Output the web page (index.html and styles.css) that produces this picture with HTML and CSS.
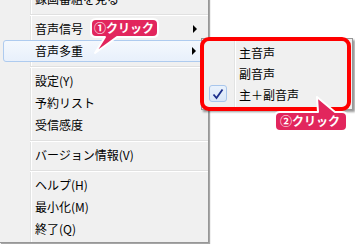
FILE: index.html
```html
<!DOCTYPE html>
<html lang="ja">
<head>
    <meta charset="UTF-8">
    <title>音声多重メニュー</title>
    <link rel="stylesheet" href="styles.css">
</head>
<body>
    <div class="menu">
        <div class="item">録画番組を見る</div>
        <div class="sep"></div>
        <div class="item has-sub">音声信号<span class="arrow"></span></div>
        <div class="item has-sub active">音声多重<span class="arrow"></span></div>
        <div class="sep"></div>
        <div class="item">設定(Y)</div>
        <div class="item">予約リスト</div>
        <div class="item">受信感度</div>
        <div class="sep"></div>
        <div class="item">バージョン情報(V)</div>
        <div class="sep"></div>
        <div class="item">ヘルプ(H)</div>
        <div class="item">最小化(M)</div>
        <div class="item">終了(Q)</div>
    </div>

    <!-- submenu popup -->
    <div class="submenu">
        <div class="sub-item">主音声</div>
        <div class="sub-item">副音声</div>
        <div class="sub-item checked">
            <span class="check">
                <svg width="12" height="12" viewBox="0 0 12 12"><path d="M1.5 6.5 L4.5 10 L10.5 1.5" fill="none" stroke="#1c2f8c" stroke-width="1.8"/></svg>
            </span>
            主＋副音声
        </div>
    </div>

    <!-- annotations -->
    <div class="mark"></div>

    <svg class="bubble-shape bubble-one" width="80" height="44" viewBox="86 14 80 44">
        <path d="M96 19 H153 Q158 19 158 24 V32 Q158 37 153 37 H117 L95 53 L105 37 H96 Q91 37 91 32 V24 Q91 19 96 19 Z"/>
    </svg>
    <div class="bubble-text bubble-text-one">①クリック</div>

    <svg class="bubble-shape bubble-two" width="84" height="42" viewBox="272 94 84 42">
        <path d="M280 112 H318 L317 97 L335 112 H342 Q347 112 347 117 V126 Q347 131 342 131 H280 Q275 131 275 126 V117 Q275 112 280 112 Z"/>
    </svg>
    <div class="bubble-text bubble-text-two">②クリック</div>
</body>
</html>
```

FILE: styles.css
```css
body {
    margin: 0;
    background: #ffffff;
    font-family: "Noto Sans CJK JP", "Noto Sans", sans-serif;
    font-size: 12px;
    color: #000;
    overflow: hidden;
    height: 244px;
}
.menu {
    width: 209px;
    box-sizing: border-box;
    margin-top: -12px;
    padding-bottom: 2px;
    background-color: #f0f0f0;
    /* icon gutter line */
    background-image: linear-gradient(to right, transparent 30px, #e2e3e3 30px, #e2e3e3 31px, #ffffff 31px, #ffffff 32px, transparent 32px);
    border-right: 1px solid #979797;
    border-bottom: 1px solid #979797;
    box-shadow: 1px 1px 1px rgba(0, 0, 0, 0.35);
}
.item {
    height: 22px;
    line-height: 22px;
    padding-left: 35px;
    padding-right: 11px;
    display: flex;
    justify-content: space-between;
    align-items: center;
    box-sizing: border-box;
    white-space: nowrap;
}
.item.active {
    margin: 0 3px;
    padding-left: 31px;
    padding-right: 8px;
    border: 1px solid #aecbef;
    border-radius: 3px;
    background: linear-gradient(#f4f8fd, #e8f0fb);
}
.arrow {
    width: 0;
    height: 0;
    border-left: 4px solid #000;
    border-top: 4px solid transparent;
    border-bottom: 4px solid transparent;
}
.sep {
    margin: 4px 0 2px 30px;
    border-top: 1px solid #e0e0e0;
    border-bottom: 1px solid #ffffff;
}
.submenu {
    position: absolute;
    left: 201px;
    top: 38px;
    width: 152px;
    height: 72px;
    box-sizing: border-box;
    padding-top: 3px;
    background-color: #f0f0f0;
    background-image: linear-gradient(to right, transparent 32px, #e2e3e3 32px, #e2e3e3 33px, #ffffff 33px, #ffffff 34px, transparent 34px);
    border: 1px solid #979797;
    box-shadow: 2px 2px 2px rgba(0, 0, 0, 0.4);
}
.sub-item {
    position: relative;
    height: 21px;
    line-height: 21px;
    padding-left: 37px;
    white-space: nowrap;
}
.check {
    position: absolute;
    left: 7px;
    top: 1px;
    width: 18px;
    height: 17px;
    box-sizing: border-box;
    border: 1px solid #a8c6ec;
    border-radius: 3px;
    background: linear-gradient(#eaf2fc, #d9e7f8);
    display: flex;
    align-items: center;
    justify-content: center;
}
.mark {
    position: absolute;
    left: 200px;
    top: 37px;
    width: 151px;
    height: 74px;
    box-sizing: border-box;
    border: 4px solid #ff0000;
    border-radius: 9px;
}
.bubble-shape {
    position: absolute;
    overflow: visible;
}
.bubble-shape path {
    fill: #e2265d;
    stroke: #ffffff;
    stroke-width: 2;
    stroke-linejoin: round;
}
.bubble-one {
    left: 86px;
    top: 14px;
}
.bubble-two {
    left: 272px;
    top: 94px;
}
.bubble-text {
    position: absolute;
    color: #ffffff;
    font-weight: bold;
    font-size: 12px;
    line-height: 18px;
    white-space: nowrap;
}
.bubble-text-one {
    left: 94px;
    top: 19px;
}
.bubble-text-two {
    left: 280px;
    top: 112px;
}
```
